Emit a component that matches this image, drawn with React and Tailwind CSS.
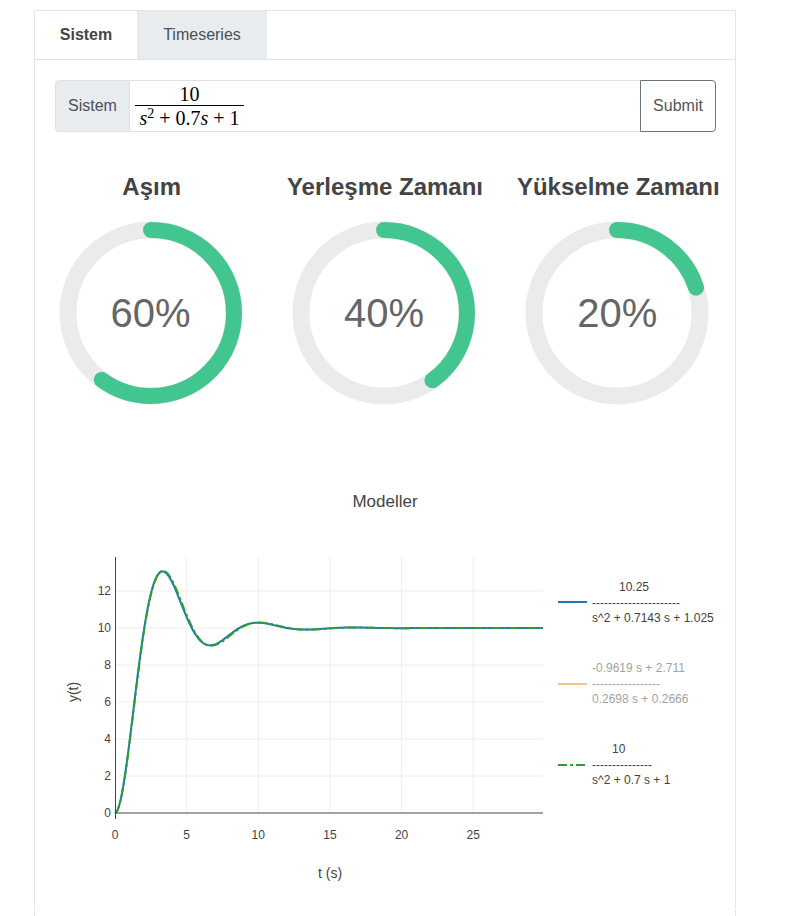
import React from "react";

const GREEN = "#43c590";
const TRACK = "#ebebeb";

const gauges = [
  { title: "Aşım", value: 60 },
  { title: "Yerleşme Zamanı", value: 40 },
  { title: "Yükselme Zamanı", value: 20 },
];

// chart mapping, page coordinates
const X0 = 115;
const XS = 14.33;
const Y0 = 813;
const YS = 18.5;
const px = (t) => X0 + t * XS;
const py = (v) => Y0 - v * YS;

function stepPath(K, sigma, wd) {
  const pts = [];
  for (let i = 0; i <= 300; i++) {
    const t = (29.87 * i) / 300;
    const y = K * (1 - Math.exp(-sigma * t) * (Math.cos(wd * t) + (sigma / wd) * Math.sin(wd * t)));
    pts.push(`${px(t).toFixed(2)},${py(y).toFixed(2)}`);
  }
  return "M" + pts.join(" L");
}

function Gauge({ title, value }) {
  const r = 83;
  const c = 2 * Math.PI * r;
  return (
    <div className="flex flex-col items-center">
      <div className="h-[30px] text-[24px] leading-[30px] font-bold text-[#444]">{title}</div>
      <div className="relative mt-4 -ml-[2px] w-[190px] h-[190px]">
        <svg width="190" height="190" viewBox="0 0 190 190">
          <circle cx="95" cy="95" r={r} fill="none" stroke={TRACK} strokeWidth="17" />
          <circle
            cx="95"
            cy="95"
            r={r}
            fill="none"
            stroke={GREEN}
            strokeWidth="16"
            strokeLinecap="round"
            strokeDasharray={`${(value / 100) * c} ${c}`}
            transform="rotate(-90 95 95)"
          />
        </svg>
        <div className="absolute inset-0 flex items-center justify-center text-[40px] text-[#666]">
          {value}%
        </div>
      </div>
    </div>
  );
}

function Chart() {
  const xticks = [0, 5, 10, 15, 20, 25];
  const yticks = [0, 2, 4, 6, 8, 10, 12];
  const font = "'Liberation Sans', Arial, sans-serif";
  return (
    <svg width="700" height="500" viewBox="35 408 700 500" style={{ fontFamily: font }}>
      <text x="385" y="507" textAnchor="middle" fontSize="17" fill="#444">Modeller</text>

      {xticks.slice(1).map((t) => (
        <line key={t} x1={px(t)} x2={px(t)} y1="557" y2={Y0} stroke="#eee" strokeWidth="1" />
      ))}
      {yticks.slice(1).map((v) => (
        <line key={v} x1={X0} x2="543" y1={py(v)} y2={py(v)} stroke="#eee" strokeWidth="1" />
      ))}

      <path d={stepPath(10, 0.35715, 0.9473)} fill="none" stroke="#1f77b4" strokeWidth="2" />
      <path d={stepPath(10, 0.35, 0.9367)} fill="none" stroke="#2ca02c" strokeWidth="2" strokeDasharray="9 3 3 3" />

      <line x1={X0} x2="543" y1={Y0} y2={Y0} stroke="#444" strokeWidth="1" />
      <line x1={X0 + 0.5} x2={X0 + 0.5} y1="557" y2="819" stroke="#444" strokeWidth="1" />

      {yticks.map((v) => (
        <text key={v} x="111" y={py(v) + 4} textAnchor="end" fontSize="12" fill="#444">{v}</text>
      ))}
      {xticks.map((t) => (
        <text key={t} x={px(t)} y="839" textAnchor="middle" fontSize="12" fill="#444">{t}</text>
      ))}

      <text x="330" y="878" textAnchor="middle" fontSize="14" fill="#444">t (s)</text>
      <text x="78" y="692" textAnchor="middle" fontSize="14" fill="#444" transform="rotate(-90 78 692)">y(t)</text>

      {/* legend */}
      <line x1="558" x2="587" y1="602" y2="602" stroke="#1f77b4" strokeWidth="2" />
      <text x="619" y="591" fontSize="12" fill="#444">10.25</text>
      <text x="592" y="606.5" fontSize="12" fill="#444">{"-".repeat(22)}</text>
      <text x="592" y="622" fontSize="12" fill="#444">s^2 + 0.7143 s + 1.025</text>

      <g opacity="0.5">
        <line x1="558" x2="587" y1="684" y2="684" stroke="#ff7f0e" strokeWidth="2" />
        <text x="592" y="672" fontSize="12" fill="#444">-0.9619 s + 2.711</text>
        <text x="592" y="687.5" fontSize="12" fill="#444">{"-".repeat(17)}</text>
        <text x="592" y="703" fontSize="12" fill="#444">0.2698 s + 0.2666</text>
      </g>

      <line x1="558" x2="587" y1="765" y2="765" stroke="#2ca02c" strokeWidth="2" strokeDasharray="9 3 3 3" />
      <text x="612" y="753" fontSize="12" fill="#444">10</text>
      <text x="592" y="768.5" fontSize="12" fill="#444">{"-".repeat(15)}</text>
      <text x="592" y="784" fontSize="12" fill="#444">s^2 + 0.7 s + 1</text>
    </svg>
  );
}

export default function App() {
  return (
    <div className="bg-white min-h-[916px] font-['Liberation_Sans',Arial,sans-serif] text-[#495057]">
      <div className="ml-[34px] mt-[10px] w-[702px] border-x border-t border-[#e4e4e4]">
        <div className="flex h-[49px] border-b border-[#e4e4e4]">
          <div className="w-[102px] flex items-center justify-center font-bold text-[16px] text-[#444]">Sistem</div>
          <div className="w-[130px] flex items-center justify-center bg-[#e9ecef] text-[16px]">Timeseries</div>
        </div>

        <div className="pl-5 pr-[19px] pt-5">
          <div className="flex h-[52px]">
            <div className="w-[75px] flex items-center justify-center bg-[#e9ecef] border border-[#dee2e6] rounded-l text-[16px]">
              Sistem
            </div>
            <div className="flex-1 flex items-center pl-[5px] border-y border-[#dee2e6] font-['Liberation_Serif',serif] text-[#000]">
              <div className="flex flex-col items-center">
                <div className="text-[20px] leading-[22px]">10</div>
                <div className="w-[109px] h-px bg-black"></div>
                <div className="text-[20px] leading-[24px] whitespace-nowrap">
                  <i>s</i>
                  <sup className="text-[14px]">2</sup>
                  <span className="mx-[5px]">+</span>0.7<i>s</i>
                  <span className="mx-[5px]">+</span>1
                </div>
              </div>
            </div>
            <button className="w-[76px] border border-[#6c757d] rounded-r text-[16px] text-[#555]">Submit</button>
          </div>
        </div>

        <div className="grid grid-cols-3 mt-10">
          {gauges.map((g) => (
            <Gauge key={g.title} {...g} />
          ))}
        </div>

        <Chart />
      </div>
      <div className="ml-[34px] mt-[2px] w-[702px] h-[10px] border-x border-[#e4e4e4]"></div>
    </div>
  );
}
